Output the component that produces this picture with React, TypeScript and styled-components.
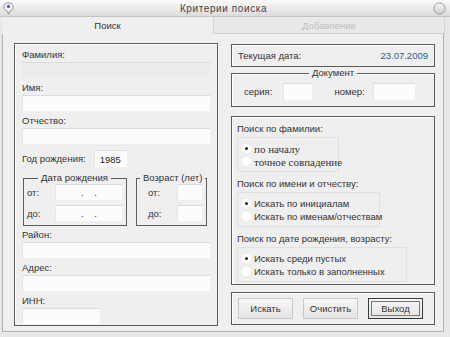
import React from "react";
import styled, { createGlobalStyle } from "styled-components";

const Global = createGlobalStyle`
  html, body {
    margin: 0;
    padding: 0;
    background: #e6e6e6;
  }
  body {
    font-family: "Liberation Sans", Arial, sans-serif;
    font-size: 9.5px;
    color: #333;
    white-space: nowrap;
  }
`;

const Window = styled.div`
  width: 450px;
  height: 337px;
  display: flex;
  flex-direction: column;
  background: #e8e8e8;
  overflow: hidden;
`;

const TitleBar = styled.div`
  height: 16px;
  display: flex;
  align-items: center;
  padding: 0 4px 0 3px;
  background: linear-gradient(#fafafa, #dcdcdc);
  border-bottom: 1px solid #c4c4c4;
`;

const Title = styled.div`
  flex: 1;
  text-align: center;
  font-size: 10px;
  letter-spacing: 0.6px;
  color: #444;
`;

const TabStrip = styled.div`
  height: 17px;
  display: flex;
  padding-left: 2px;
`;

const Tab = styled.div<{ $active?: boolean }>`
  width: ${(p) => (p.$active ? "211px" : "230px")};
  display: flex;
  align-items: center;
  justify-content: center;
  background: ${(p) => (p.$active ? "#efefef" : "#e9e9e9")};
  color: ${(p) => (p.$active ? "#333" : "#bdbdbd")};
  border-right: 1px solid #d6d6d6;
  border-bottom: ${(p) => (p.$active ? "none" : "1px solid #cfcfcf")};
`;

const Frame = styled.div`
  margin: 0 6px 5px 2px;
  flex: 1;
  display: flex;
  gap: 13px;
  padding: 9px 7px 0 11px;
  background: #efefef;
  border: 1px solid #b0b0b0;
  border-top: none;
`;

const Panel = styled.div`
  box-sizing: border-box;
  border: 1px solid #5c5c5c;
  box-shadow: inset 1px 1px 0 #fff;
  background: #efefef;
`;

const LeftPanel = styled(Panel)`
  width: 204px;
  height: 283px;
  flex-shrink: 0;
  padding: 4px 7px 0 7px;
  display: flex;
  flex-direction: column;
`;

const Label = styled.div`
  height: 14px;
  line-height: 14px;
`;

const Input = styled.div<{ $w?: number; $h?: number; $grey?: boolean }>`
  width: ${(p) => (p.$w ? p.$w + "px" : "auto")};
  height: ${(p) => p.$h ?? 16}px;
  flex-shrink: 0;
  box-sizing: border-box;
  background: ${(p) => (p.$grey ? "#ececec" : "#fcfcfc")};
  border-top: 1px solid #dcdcdc;
  border-left: 1px solid #e6e6e6;
  display: flex;
  align-items: center;
  color: #222;
`;

const FieldBlock = styled.div`
  margin-bottom: 3px;
`;

const YearRow = styled.div`
  display: flex;
  align-items: center;
  gap: 8px;
  margin-top: 3px;
  height: 17px;
`;

const Groups = styled.div`
  display: flex;
  gap: 9px;
  margin-top: 8px;
  padding-left: 1px;
`;

const Group = styled.div<{ $w: number }>`
  position: relative;
  width: ${(p) => p.$w}px;
  height: 48px;
  margin-top: 3px;
  border: 1px solid #5c5c5c;
  box-sizing: border-box;
  padding: 5px 4px 0 3px;
  display: flex;
  flex-direction: column;
  gap: 5px;
`;

const Legend = styled.span<{ $left: number }>`
  position: absolute;
  top: -7px;
  left: ${(p) => p.$left}px;
  padding: 0 3px;
  background: #efefef;
  line-height: 12px;
`;

const GroupRow = styled.div<{ $indent?: number }>`
  display: flex;
  align-items: center;
  justify-content: space-between;
  height: 16px;
  padding-left: ${(p) => p.$indent ?? 0}px;
`;

const RightCol = styled.div`
  width: 204px;
  flex-shrink: 0;
  display: flex;
  flex-direction: column;
`;

const DateBox = styled(Panel)`
  height: 23px;
  margin-top: 1px;
  display: flex;
  align-items: center;
  justify-content: space-between;
  padding: 0 6px 0 6px;
`;

const DateValue = styled.span`
  color: #2d5f8e;
`;

const DocBox = styled(Panel)`
  position: relative;
  margin-top: 6px;
  display: flex;
  align-items: center;
  padding: 2px 0 0 12px;
  height: 34px;
`;

const DocLegend = styled.span`
  position: absolute;
  top: -7px;
  left: 50%;
  transform: translateX(-50%);
  padding: 0 3px;
  background: #efefef;
  line-height: 12px;
`;

const DocLabel = styled.span<{ $gap?: number }>`
  margin-left: ${(p) => p.$gap ?? 0}px;
`;

const SearchBox = styled(Panel)`
  margin-top: 9px;
  height: 169px;
  padding: 5px 5px 0 5px;
  display: flex;
  flex-direction: column;
  align-items: flex-start;
`;

const OptionTitle = styled.div<{ $first?: boolean }>`
  line-height: 14px;
  margin-top: ${(p) => (p.$first ? 0 : 5)}px;
`;

const RadioGroup = styled.div<{ $w: number }>`
  width: ${(p) => p.$w}px;
  box-sizing: border-box;
  margin-top: 1px;
  padding: 4px 4px 3px 4px;
  border: 1px solid #e0e0e0;
  display: flex;
  flex-direction: column;
`;

const RadioRow = styled.div<{ $serif?: boolean }>`
  display: flex;
  align-items: center;
  height: 13px;
  gap: 3px;
  font-family: ${(p) =>
    p.$serif ? '"Liberation Serif", "Times New Roman", serif' : "inherit"};
  font-size: ${(p) => (p.$serif ? "11px" : "9.5px")};
`;

const RadioDot = styled.span<{ $on?: boolean }>`
  width: 9px;
  height: 9px;
  flex-shrink: 0;
  border-radius: 50%;
  background: #fff;
  display: flex;
  align-items: center;
  justify-content: center;
  &::after {
    content: "";
    width: 3px;
    height: 3px;
    border-radius: 50%;
    background: ${(p) => (p.$on ? "#222" : "transparent")};
  }
`;

const ButtonBox = styled(Panel)`
  margin-top: 7px;
  height: 33px;
  padding: 5px 0 0 6px;
  display: flex;
  gap: 10px;
`;

const Button = styled.div<{ $default?: boolean }>`
  width: 55px;
  height: 21px;
  box-sizing: border-box;
  display: flex;
  align-items: center;
  justify-content: center;
  background: linear-gradient(#f7f7f7, #e4e4e4);
  border: 1px solid ${(p) => (p.$default ? "#3a3a3a" : "#c8c8c8")};
  outline: ${(p) => (p.$default ? "1px solid #777" : "none")};
  outline-offset: -4px;
  color: #333;
`;

const DateMask = styled(Input)`
  justify-content: center;
`;

function TitleIcon() {
  return (
    <svg width="11" height="13" viewBox="0 0 11 13">
      <path
        d="M5.5 0.8 C8.4 0.8 10.2 2.6 10.2 5 C10.2 7.3 8.6 8.6 6.6 9.2 L5.5 12.2 L4.4 9.2 C2.4 8.6 0.8 7.3 0.8 5 C0.8 2.6 2.6 0.8 5.5 0.8 Z"
        fill="#f4f4f8"
        stroke="#8a8a9a"
        strokeWidth="0.9"
      />
      <circle cx="5.5" cy="4.4" r="1.6" fill="#6b52b8" />
    </svg>
  );
}

function CloseIcon() {
  return (
    <svg width="13" height="13" viewBox="0 0 13 13">
      <defs>
        <linearGradient id="cb" x1="0" y1="0" x2="0" y2="1">
          <stop offset="0" stopColor="#f8f8f8" />
          <stop offset="1" stopColor="#cfcfcf" />
        </linearGradient>
      </defs>
      <circle cx="6.5" cy="6.5" r="5.6" fill="url(#cb)" stroke="#9a9a9a" />
    </svg>
  );
}

function Radio({
  on,
  serif,
  children,
}: {
  on?: boolean;
  serif?: boolean;
  children: React.ReactNode;
}) {
  return (
    <RadioRow $serif={serif}>
      <RadioDot $on={on} />
      {children}
    </RadioRow>
  );
}

export default function App() {
  return (
    <>
      <Global />
      <Window>
        <TitleBar>
          <TitleIcon />
          <Title>Критерии поиска</Title>
          <CloseIcon />
        </TitleBar>
        <TabStrip>
          <Tab $active>Поиск</Tab>
          <Tab>Добавление</Tab>
        </TabStrip>
        <Frame>
          <LeftPanel>
            <FieldBlock>
              <Label>Фамилия:</Label>
              <Input $grey />
            </FieldBlock>
            <FieldBlock>
              <Label>Имя:</Label>
              <Input />
            </FieldBlock>
            <FieldBlock>
              <Label>Отчество:</Label>
              <Input />
            </FieldBlock>
            <YearRow>
              <span>Год рождения:</span>
              <Input $w={33} $h={17} style={{ paddingLeft: 5 }}>
                1985
              </Input>
            </YearRow>
            <Groups>
              <Group $w={104}>
                <Legend $left={14}>Дата рождения</Legend>
                <GroupRow>
                  <span>от:</span>
                  <DateMask $w={67}>.&nbsp;&nbsp;&nbsp;&nbsp;.</DateMask>
                </GroupRow>
                <GroupRow>
                  <span>до:</span>
                  <DateMask $w={67}>.&nbsp;&nbsp;&nbsp;&nbsp;.</DateMask>
                </GroupRow>
              </Group>
              <Group $w={71}>
                <Legend $left={3}>Возраст (лет)</Legend>
                <GroupRow $indent={8}>
                  <span>от:</span>
                  <Input $w={25} />
                </GroupRow>
                <GroupRow $indent={8}>
                  <span>до:</span>
                  <Input $w={25} />
                </GroupRow>
              </Group>
            </Groups>
            <FieldBlock style={{ marginTop: 2 }}>
              <Label>Район:</Label>
              <Input />
            </FieldBlock>
            <FieldBlock>
              <Label>Адрес:</Label>
              <Input />
            </FieldBlock>
            <FieldBlock>
              <Label>ИНН:</Label>
              <Input $w={78} />
            </FieldBlock>
          </LeftPanel>
          <RightCol>
            <DateBox>
              <span>Текущая дата:</span>
              <DateValue>23.07.2009</DateValue>
            </DateBox>
            <DocBox>
              <DocLegend>Документ</DocLegend>
              <DocLabel>серия:</DocLabel>
              <Input $w={29} $h={17} style={{ marginLeft: 11 }} />
              <DocLabel $gap={22}>номер:</DocLabel>
              <Input $w={42} $h={17} style={{ marginLeft: 8 }} />
            </DocBox>
            <SearchBox>
              <OptionTitle $first>Поиск по фамилии:</OptionTitle>
              <RadioGroup $w={102}>
                <Radio on serif>
                  по началу
                </Radio>
                <Radio serif>точное совпадение</Radio>
              </RadioGroup>
              <OptionTitle>Поиск по имени и отчеству:</OptionTitle>
              <RadioGroup $w={143}>
                <Radio on>Искать по инициалам</Radio>
                <Radio>Искать по именам/отчествам</Radio>
              </RadioGroup>
              <OptionTitle>Поиск по дате рождения, возрасту:</OptionTitle>
              <RadioGroup $w={170}>
                <Radio on>Искать среди пустых</Radio>
                <Radio>Искать только в заполненных</Radio>
              </RadioGroup>
            </SearchBox>
            <ButtonBox>
              <Button>Искать</Button>
              <Button>Очистить</Button>
              <Button $default>Выход</Button>
            </ButtonBox>
          </RightCol>
        </Frame>
      </Window>
    </>
  );
}
